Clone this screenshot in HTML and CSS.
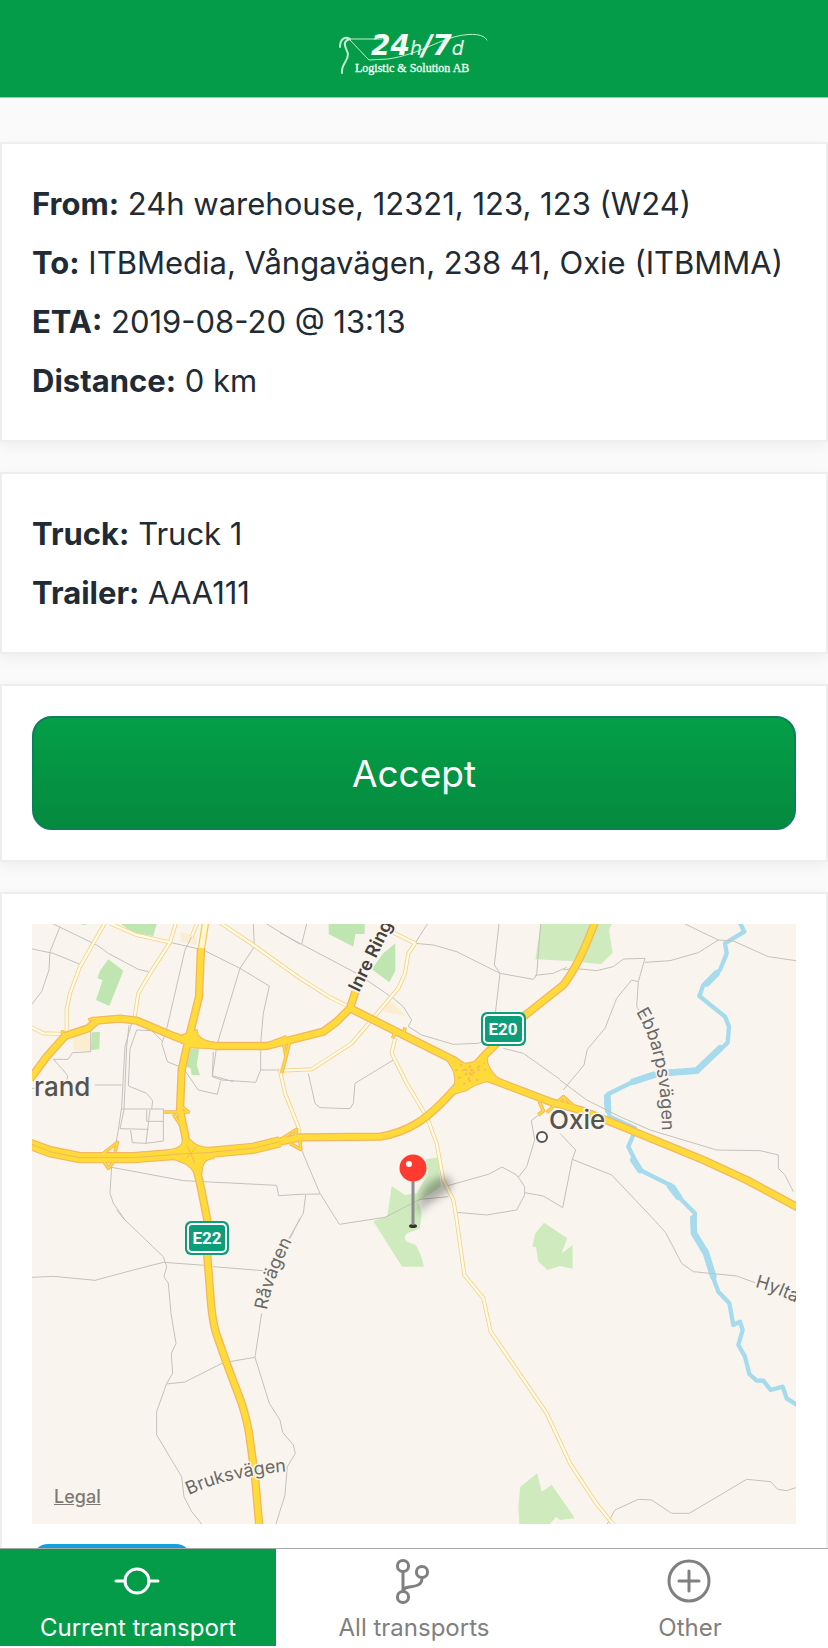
FILE: index.html
```html
<!DOCTYPE html>
<html lang="en">

<head>
    <meta charset="UTF-8">
    <meta name="viewport" content="width=device-width, initial-scale=1.0">
    <title>Current transport</title>
    <link rel="stylesheet" href="styles.css">
</head>

<body>
    <header class="header">
        <!-- logo -->
        <svg class="logo" viewBox="0 0 156 46" role="img" aria-label="24h/7d Logistic &amp; Solution AB">
            <g fill="none" stroke="#bff0cf" stroke-linecap="round">
                <path stroke-width="2" d="M4 17C4 9 9 6 14 9M14 9C5 12 10 17 12 24C12 32 5 34 6 43" />
                <path stroke-width="1" d="M10 9L46 9M14 10L33 30L52 29C84 24 100 11 122 6C136 3 148 4 151 10" />
            </g>
            <text class="logo-name" x="35" y="25">24<tspan class="logo-small">h</tspan>/7<tspan class="logo-small">d</tspan></text>
            <text class="logo-sub" x="19" y="42">Logistic &amp; Solution AB</text>
        </svg>
    </header>

    <main class="content">
        <section class="card">
            <p><b>From:</b> 24h warehouse, 12321, 123, 123 (W24)</p>
            <p><b>To:</b> ITBMedia, Vångavägen, 238 41, Oxie (ITBMMA)</p>
            <p><b>ETA:</b> 2019-08-20 @ 13:13</p>
            <p><b>Distance:</b> 0 km</p>
        </section>

        <section class="card">
            <p><b>Truck:</b> Truck 1</p>
            <p><b>Trailer:</b> AAA111</p>
        </section>

        <section class="card">
            <button type="button" class="accept">Accept</button>
        </section>

        <section class="card">
            <div class="map">
                <svg class="map-svg" viewBox="0 0 764 600" preserveAspectRatio="xMidYMid slice">
                    <defs>
                        <filter id="soft" x="-50%" y="-50%" width="200%" height="200%">
                            <feGaussianBlur stdDeviation="4" />
                        </filter>
                        <path id="road-ring" d="M327 69L372 -23" />
                        <path id="road-ebbarp" d="M604 88Q630 130 630 212" />
                        <path id="road-ravagen" d="M235 386Q241 350 269 300" />
                        <path id="road-bruks" d="M157 571Q200 551 262 547" />
                        <path id="road-hylta" d="M723 363Q745 368 790 392" />
                        <!-- motorways -->
                        <path id="m-west" d="M90 508L140 440L195 378L265 355L290 332L360 326L410 332L520 378L565 395L650 408H800L850 395L970 365L1010 335L1050 295L1066 245" />
                        <path id="m-south" d="M603 115L597 260L565 390L545 480L540 600L560 700L585 760L600 820L622 930L622 1040L630 1140Q636 1240 652 1280L680 1360L725 1480Q744 1540 750 1590L765 1700L778 1850" />
                        <path id="m-inner" d="M90 703L150 725L240 743H400L540 732L620 728L760 715L840 695L900 682L1140 680Q1200 670 1250 640Q1300 610 1370 530L1410 485L1450 440L1570 320L1690 225Q1740 160 1785 35" />
                        <path id="m-inner-wide" d="M90 703L150 725L240 743H400L540 732L620 728L760 715L840 695" />
                        <path id="m-east" d="M1050 295L1110 325L1240 390L1360 450L1410 485L1480 510L1650 575L1740 600L1830 635L1920 672L2110 750L2240 810L2395 893" />
                        <g id="ramps">
                            <path d="M850 395L858 440L845 490M870 390L858 440M1640 608L1690 560L1735 600M1690 560L1700 590M1618 575L1630 602L1615 615M1215 352L1210 380M1178 385L1186 365" />
                            <path d="M310 730L352 697L345 725M308 750L325 775L345 750M490 606H565L545 590M520 612L545 650M840 690L890 658L886 680M870 700L902 718L900 690" />
                            <path d="M188 360V376M265 330L285 324M135 435L145 430M530 375L550 400M580 370L595 390M820 395L860 380" />
                        </g>
                        <!-- secondary roads -->
                        <g id="streets">
                            <path d="M315 38L280 100L240 170L210 250L200 300V365M330 40L410 75L510 97M528 38L510 97L450 190L415 250L403 325M592 38L575 80M660 38L760 105L900 205L990 262L1050 292M90 350L130 370L195 372" />
                            <path d="M1180 68L1245 100L1225 130L1215 190L1195 235L1140 300L1055 400L935 478L840 482L855 550L895 650L902 700" />
                            <path d="M1185 385L1175 430L1220 520L1280 620L1310 700L1330 810L1360 870L1370 930L1393 1095L1450 1165L1472 1265L1640 1510L1710 1660L1785 1775L1845 1850" />
                        </g>
                    </defs>

                    <rect class="land" width="764" height="600" />

                    <g transform="translate(-32 -14) scale(.33333)">
                        <!-- parks -->
                        <g class="park">
                            <path d="M325 148L370 182L328 288L288 270L308 210L292 205L300 182Z" />
                            <path d="M362 42H470L460 78L400 68Z" />
                            <path d="M243 42H262L252 46Z" />
                            <path d="M275 367L300 365L298 418L273 420Z" />
                            <path d="M572 418L598 415L590 465L600 496L575 495L572 475L558 470Z" />
                            <path d="M986 42H1094V72H1066L1060 110L986 72Z" />
                            <path d="M1186 100V182L1168 217L1115 178L1150 130Z" />
                        </g>
                        <g class="park park-light">
                            <path d="M1622 42H1835L1827 60L1838 128L1803 163L1710 153L1606 148Z" />
                            <path d="M1277 748L1315 742L1322 830L1255 875L1265 910L1260 955L1222 970Q1206 985 1222 996L1246 1004Q1262 1025 1272 1070H1206L1120 934L1162 918L1175 828L1215 855L1250 850L1285 790Z" />
                            <path d="M1632 938L1702 985L1685 1030L1718 1005V1076L1680 1068L1642 1080L1615 1055L1608 1012L1597 1010L1606 970Z" />
                            <path d="M1561 1730L1612 1690L1625 1745L1655 1725L1725 1825L1680 1830L1668 1820L1650 1842H1558L1555 1790Z" />
                        </g>
                        <path class="sand" d="M218 372H272V425L222 420ZM540 65L590 80V105L545 95ZM1160 262L1220 318L1150 305Z" />

                        <!-- river -->
                        <g class="river">
                            <path d="M2218 35L2233 65L2175 100L2180 130L2160 180L2110 225L2098 258L2175 320L2187 350L2183 398L2090 485H2010L1910 510L1825 552L1818 580L1830 620L1905 655L1898 680L1885 710L1920 780L2020 830L2045 870L2085 910L2083 930L2080 970L2120 1025L2142 1110L2155 1145L2188 1180L2200 1245L2220 1235L2228 1260L2215 1305L2235 1340L2248 1392L2270 1412H2290L2312 1440L2348 1430L2360 1465L2395 1488" />
                            <path class="river-wide" d="M2160 415L2090 482L2010 488M1960 495L1900 515M1822 560L1824 600M1900 750L1920 780M2080 925L2082 970L2118 1030L2140 1100M2150 190L2120 220M2010 828L2035 860" />
                        </g>

                        <!-- small roads -->
                        <g class="path">
                            <path d="M160 42L290 105L325 130L415 178L445 185M180 50L150 125L147 180L125 245L96 282M96 117L160 130L240 163M510 97L610 120L720 175L808 228L790 310L782 400V480L767 517L665 510L637 500L650 408L720 175L763 110L760 42M800 42L900 103M575 80L555 120L497 370L485 400L502 455L550 475L595 540L652 553L662 512" />
                            <path d="M395 340L375 410L365 590L355 660L335 770L330 850L340 880L375 930M387 345L380 410L372 600L360 656L445 658M410 360L390 418L385 528L440 550L458 572L455 598M410 360L455 362L487 393M365 597H492M392 660L397 698L438 700L490 693V598M450 600L438 700M440 600V634H490M272 360V425L218 428L204 448H160L185 475L203 497L200 515M285 525H365M96 535H105M335 772L550 812L830 826L836 857L900 853L960 852M640 425L637 497L700 515M782 480H840L900 478" />
                            <path d="M840 68L905 103L1070 190L1180 265L1210 290L1235 330L1225 350L1265 375L1360 403L1435 400L1490 380M905 103L920 42M1282 42L1245 100L1300 105L1370 125L1500 190L1600 208L1610 195L1622 42M1497 42L1483 165L1500 190L1486 310M1606 196L1660 190L1700 172M925 490L945 580L960 593L1050 596L1060 580L1065 520L1180 450M905 720L930 780L960 850L1018 943L1155 922L1260 868L1345 860M917 855L910 910L870 980L830 1050M1340 828L1465 793L1506 771L1550 795L1574 830V855L1550 900L1460 915L1370 907M1555 802L1580 770L1604 690L1594 632L1620 612M1574 848L1630 858L1688 893L1717 748L1727 720L1680 670M1510 415L1570 430L1680 508M1690 540L1752 465L1762 418L1815 355L1850 265L1895 210L1915 215" />
                            <path d="M1690 180L1720 175L1790 182L1840 170L1870 147L1935 145L1915 215L1910 290L1930 320M1935 157L2010 152L2095 128L2155 90L2055 42M2155 90L2200 93L2305 140L2388 152M1680 510L1760 570L1860 620L1950 660L2150 720L2280 722L2335 735V775L2355 795L2380 845M1717 748L1835 795L1965 932L1997 968L2045 1060L2080 1085L2210 1098L2265 1118" />
                            <path d="M350 900L375 930L490 1040L500 1070L492 1100L505 1120L513 1210L528 1300L514 1330L518 1390L500 1420L470 1505V1575L545 1700L552 1760L575 1805L605 1842M500 1422L555 1416L670 1358L765 1342L785 1210M96 1102L160 1099L285 1111L400 1080L490 1057L615 1066M640 1070L790 1082M870 985L900 925M765 1342L808 1480L840 1530L848 1567L880 1605L886 1630L862 1670L855 1755L828 1842M1822 1842L1845 1800L1915 1768L1955 1770L2015 1810H2068L2240 1708L2312 1715L2333 1738L2360 1742L2388 1733" />
                        </g>

                        <use href="#streets" class="street-edge" />
                        <use href="#streets" class="street-fill" />
                        <path class="trunk" d="M617 35L604 118" />
                        <path class="trunk-fill" d="M617 35L604 118" />

                        <g class="motor-edge">
                            <use href="#ramps" class="ramp-edge" />
                            <use href="#m-west" />
                            <use href="#m-south" />
                            <use href="#m-inner" />
                            <use href="#m-inner-wide" class="wide-edge" />
                            <use href="#m-east" />
                            <path class="blob" d="M1330 438Q1385 470 1410 458Q1440 455 1462 425Q1450 475 1510 518Q1460 500 1400 540L1350 555Q1390 500 1330 438ZM505 720Q550 715 548 690H570Q590 715 640 715V745Q605 745 605 790H585Q565 755 510 745ZM548 375L590 360Q590 390 640 398V415L560 412Z" />
                        </g>
                        <g class="motor-fill">
                            <use href="#ramps" class="ramp-fill" />
                            <use href="#m-west" />
                            <use href="#m-south" />
                            <use href="#m-inner" />
                            <use href="#m-inner-wide" class="wide-fill" />
                            <use href="#m-east" />
                            <path class="blob" d="M1330 438Q1385 470 1410 458Q1440 455 1462 425Q1450 475 1510 518Q1460 500 1400 540L1350 555Q1390 500 1330 438ZM505 720Q550 715 548 690H570Q590 715 640 715V745Q605 745 605 790H585Q565 755 510 745ZM548 375L590 360Q590 390 640 398V415L560 412Z" />
                        </g>
                        <!-- lanes inside the junctions -->
                        <path class="lanes" d="M96 703L150 725L240 743H400L540 732L620 728L760 715L840 695M560 705L585 760M590 710L560 745" />
                        <path class="lanes dashes" d="M1380 462L1440 518M1365 480H1458M1375 505L1455 460M1390 525L1440 465M1410 465V525" />
                    </g>

                    <!-- place and road names -->
                    <text class="place" x="2" y="172">rand</text>
                    <text class="place" x="517" y="205">Oxie</text>
                    <circle class="town" cx="510" cy="213" r="5" />
                    <text class="road road-bold"><textPath href="#road-ring">Inre Ring</textPath></text>
                    <text class="road"><textPath href="#road-ebbarp">Ebbarpsvägen</textPath></text>
                    <text class="road"><textPath href="#road-ravagen">Råvägen</textPath></text>
                    <text class="road"><textPath href="#road-bruks">Bruksvägen</textPath></text>
                    <text class="road"><textPath href="#road-hylta">Hylta</textPath></text>

                    <g class="shield">
                        <rect class="shield-bg" x="449" y="88" width="45" height="34" rx="6" />
                        <rect class="shield-line" x="452" y="91" width="39" height="28" rx="4" />
                        <text x="471" y="111">E20</text>
                        <rect class="shield-bg" x="153" y="297" width="44" height="34" rx="6" />
                        <rect class="shield-line" x="156" y="300" width="38" height="28" rx="4" />
                        <text x="175" y="320">E22</text>
                    </g>

                    <!-- pin -->
                    <path class="pin-shadow" filter="url(#soft)" d="M384 292L390 268Q396 256 412 252Q424 254 418 266Q404 276 396 280Z" />
                    <ellipse cx="381" cy="302" rx="4" ry="2" fill="#333" />
                    <path d="M381 256V301" stroke="#8c8c8c" stroke-width="3" />
                    <circle cx="381" cy="244" r="13.5" fill="#ff3a2f" />
                    <circle cx="377" cy="240" r="3" fill="#fff" />
                </svg>
                <a class="legal" href="#">Legal</a>
            </div>
            <button type="button" class="navigate" aria-label="Navigate"></button>
        </section>
    </main>

    <nav class="tabs">
        <a class="tab active" href="#">
            <svg class="tab-icon" viewBox="0 0 48 48">
                <circle cx="23" cy="24" r="12" />
                <path d="M2 24H11M35 24H44" />
            </svg>
            Current transport
        </a>
        <a class="tab" href="#">
            <svg class="tab-icon" viewBox="0 0 48 48">
                <circle cx="13" cy="9" r="5.6" />
                <circle cx="13" cy="40" r="5.6" />
                <circle cx="32" cy="15" r="5.6" />
                <path d="M13 15V34C15 28 22 31 28 28Q32 26 32 21" />
            </svg>
            All transports
        </a>
        <a class="tab" href="#">
            <svg class="tab-icon" viewBox="0 0 48 48">
                <circle cx="23" cy="24" r="20" />
                <path d="M23 14V34M13 24H33" />
            </svg>
            Other
        </a>
    </nav>
</body>

</html>
```

FILE: styles.css
```css
* {
    box-sizing: border-box;
}

body {
    font-family: Inter, "Liberation Sans", sans-serif;
    margin: 0;
    height: 100vh;
    display: flex;
    flex-direction: column;
    background-color: #fafafa;
    color: #212b35;
}

/* header */
.header {
    flex: none;
    height: 98px;
    padding-top: 30px;
    background-color: #049c48;
    border-bottom: 1px solid #8fcfa9;
    text-align: center;
}

.logo {
    width: 156px;
    height: 46px;
    overflow: visible;
}

.logo text {
    fill: #f1fff5;
}

.logo-name {
    font-family: "DejaVu Sans", sans-serif;
    font-style: italic;
    font-weight: bold;
    font-size: 28px;
}

.logo-small {
    font-size: 19px;
    font-weight: normal;
}

.logo-sub {
    font-family: "Liberation Serif", serif;
    font-size: 12px;
    stroke: #f1fff5;
    stroke-width: 0.3;
}

/* cards */
.content {
    flex: 1;
    min-height: 0;
    overflow-y: auto;
    scrollbar-width: none;
    padding-top: 44px;
}

.card {
    background-color: white;
    border: 2px solid #eeeeee;
    padding: 30px;
    margin-bottom: 30px;
    box-shadow: 0 4px 12px rgba(0, 0, 0, 0.05);
}

.card p {
    margin: 0;
    font-size: 31px;
    line-height: 59px;
}

.card b {
    font-weight: 700;
}

.accept {
    display: block;
    width: 100%;
    height: 114px;
    border: 2px solid #0c7f5c;
    border-radius: 20px;
    background: linear-gradient(#049f48, #048a3f);
    color: white;
    font-family: inherit;
    font-size: 37px;
    cursor: pointer;
}

.navigate {
    display: block;
    width: 160px;
    height: 60px;
    margin-top: 20px;
    border: none;
    border-radius: 16px;
    background-color: #12a1dd;
}

/* map */
.map {
    position: relative;
    height: 600px;
    overflow: hidden;
}

.map-svg {
    display: block;
    width: 100%;
    height: 100%;
}

.land {
    fill: #f9f5ee;
}

.park {
    fill: #bfe6b0;
}

.park-light {
    fill: #cfebbe;
}

.sand {
    fill: #fbedcf;
}

.river,
.path,
.street-edge,
.street-fill,
.trunk,
.trunk-fill,
.motor-edge,
.motor-fill,
.lanes {
    fill: none;
    stroke-linejoin: round;
}

.river {
    stroke: #a5dbed;
    stroke-width: 13;
}

.river-wide {
    stroke-width: 20;
    stroke-linecap: round;
}

.path {
    stroke: #c4c1bc;
    stroke-width: 3;
}

.street-edge {
    stroke: #f5d284;
    stroke-width: 12;
}

.street-fill {
    stroke: #fffbea;
    stroke-width: 7;
}

.trunk {
    stroke: #f3c176;
    stroke-width: 22;
}

.trunk-fill {
    stroke: #fffac4;
    stroke-width: 15;
}

.motor-edge {
    stroke: #f4b760;
    stroke-width: 25;
}

.motor-fill {
    stroke: #ffdb3a;
    stroke-width: 17;
}

.wide-edge {
    stroke-width: 34;
}

.wide-fill {
    stroke-width: 27;
}

.motor-edge .ramp-edge {
    stroke-width: 11;
}

.motor-fill .ramp-fill {
    stroke-width: 5;
}

.motor-edge .blob {
    fill: #f4b760;
    stroke-width: 6;
}

.motor-fill .blob {
    fill: #ffdb3a;
    stroke: none;
}

.lanes {
    stroke: #f4b760;
    stroke-width: 3;
}

.dashes {
    stroke-width: 5;
    stroke-dasharray: 8 14;
}

.map text {
    paint-order: stroke;
    stroke: #f9f5ee;
    stroke-width: 3px;
    stroke-linejoin: round;
}

.place {
    fill: #55534f;
    font-size: 26px;
    font-weight: 500;
}

.road {
    fill: #6b6965;
    font-size: 18px;
}

.road-bold {
    fill: #44423f;
    font-weight: 600;
}

.town {
    fill: white;
    stroke: #55534f;
    stroke-width: 2;
}

.shield-bg {
    fill: #0d9d78;
}

.shield-line {
    fill: none;
    stroke: white;
    stroke-width: 2;
}

.map .shield text {
    fill: white;
    stroke: none;
    font-family: Roboto, sans-serif;
    font-size: 17px;
    font-weight: bold;
    text-anchor: middle;
}

.pin-shadow {
    fill: rgba(0, 0, 0, 0.3);
}

.legal {
    position: absolute;
    left: 22px;
    bottom: 15px;
    color: #7d7a75;
    font-size: 18px;
    font-weight: 500;
    line-height: 24px;
}

/* tab bar */
.tabs {
    flex: none;
    display: flex;
    height: 100px;
    padding-bottom: 2px;
    background-color: white;
    border-top: 1px solid #a7a7a7;
}

.tab {
    flex: 1;
    display: flex;
    flex-direction: column;
    align-items: center;
    gap: 9px;
    padding-top: 8px;
    color: #808080;
    font-size: 24px;
    line-height: 28px;
    text-decoration: none;
}

.tab.active {
    background-color: #049c48;
    color: white;
}

.tab-icon {
    width: 48px;
    height: 48px;
    fill: none;
    stroke: currentColor;
    stroke-width: 3;
    stroke-linecap: round;
}
```
